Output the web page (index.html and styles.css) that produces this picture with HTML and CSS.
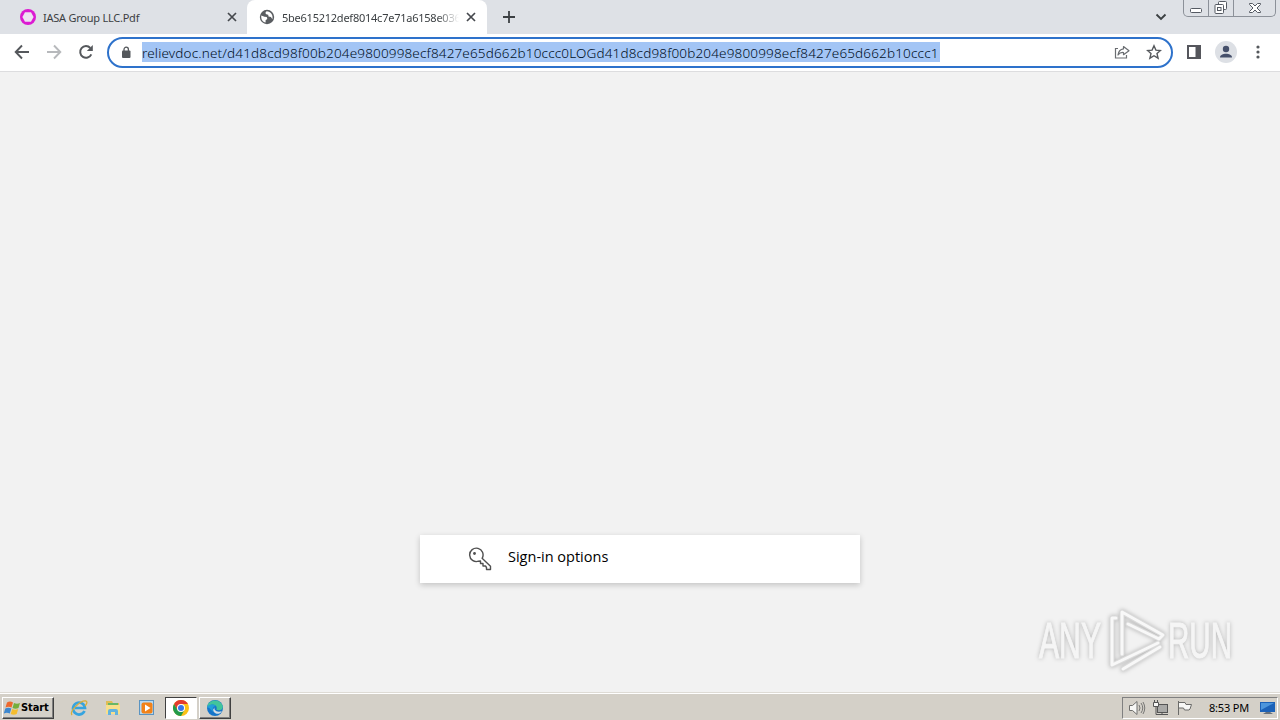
FILE: index.html
```html
<!DOCTYPE html>
<html lang="en">
<head>
    <meta charset="UTF-8">
    <meta name="viewport" content="width=device-width, initial-scale=1.0">
    <title>Sign-in options</title>
    <link rel="stylesheet" href="styles.css">
</head>
<body>
    <!-- Tabs -->
    <div class="tabs">
        <div class="tab">
            <svg class="favicon" width="16" height="16" viewBox="0 0 16 16"><circle cx="8" cy="8" r="8" fill="#dc1bd2"/><path d="M5 3.200h6L13.600 8 11 12.800H5L2.400 8z" fill="#eee2f2"/></svg>
            <span class="tab-title">IASA Group LLC.Pdf</span>
            <svg class="tab-close" width="10" height="10" viewBox="0 0 10 10"><path d="M1 1l8 8M9 1L1 9" stroke="#45484d" stroke-width="1.700"/></svg>
        </div>
        <div class="tab active">
            <svg class="favicon" width="16" height="16" viewBox="0 0 16 16"><circle cx="8" cy="8" r="7.200" fill="#5a5d61"/><path d="M2.300 6.500l3.200 1.200 2.300.2.500 2-1.700 1.300v2.400C3.500 13 1.800 10 2.300 6.500zM7.500 2.300L6.300 4l1 1.300 1.900.4.3 1.800 2.400.5 1.500 2.200c1-4-1.600-7.600-5.900-7.900z" fill="#fff"/></svg>
            <span class="tab-title fade">5be615212def8014c7e71a6158e036</span>
            <svg class="tab-close" width="10" height="10" viewBox="0 0 10 10"><path d="M1 1l8 8M9 1L1 9" stroke="#45484d" stroke-width="1.700"/></svg>
        </div>
        <svg class="new-tab" width="12" height="12" viewBox="0 0 12 12"><path d="M6 0v12M0 6h12" stroke="#3c4043" stroke-width="1.800"/></svg>
        <svg class="tab-search" width="12" height="8" viewBox="0 0 12 8"><path d="M1.500 1.500L6 6l4.500-4.500" fill="none" stroke="#3c4043" stroke-width="1.900"/></svg>
        <div class="window-buttons">
            <span><svg width="14" height="14" viewBox="0 0 14 14"><rect x="1.500" y="7.500" width="11" height="4" rx="1" fill="#fff" stroke="#555a63"/></svg></span>
            <span><svg width="14" height="14" viewBox="0 0 14 14"><path d="M4.500 3.500v-2a1 1 0 0 1 1-1h6a1 1 0 0 1 1 1v6a1 1 0 0 1-1 1h-2" fill="#fff" stroke="#555a63"/><rect x="1" y="3.500" width="8.500" height="9" rx="1" fill="#fff" stroke="#555a63"/><rect x="3.500" y="6.500" width="3.500" height="3" fill="none" stroke="#555a63"/></svg></span>
            <span><svg width="14" height="14" viewBox="0 0 14 14"><path d="M1.500 2.500h3L7 5l2.500-2.500h3v1L9 7l3.500 3.500v1h-3L7 9l-2.500 2.500h-3v-1L5 7 1.500 3.500z" fill="#fff" stroke="#555a63"/></svg></span>
        </div>
    </div>

    <!-- Toolbar -->
    <div class="toolbar">
        <svg class="nav" width="16" height="16" viewBox="0 0 16 16"><path d="M15 8H2M8 1.500L1.700 8 8 14.500" fill="none" stroke="#55585c" stroke-width="1.900"/></svg>
        <svg class="nav" width="16" height="16" viewBox="0 0 16 16"><path d="M1 8h13M8 1.500L14.300 8 8 14.500" fill="none" stroke="#b7b9bc" stroke-width="1.900"/></svg>
        <svg class="nav" width="16" height="16" viewBox="0 0 16 16"><path d="M13.300 10.300A5.800 5.800 0 1 1 12.300 4" fill="none" stroke="#55585c" stroke-width="2"/><path d="M14.800 1v6h-6z" fill="#55585c"/></svg>
        <div class="address">
            <svg class="lock" width="10" height="13" viewBox="0 0 10 13"><rect x="1" y="4.500" width="8.500" height="7.500" rx="1" fill="#55585c"/><path d="M3 5V3.400a2.200 2.200 0 0 1 4.400 0V5" fill="none" stroke="#55585c" stroke-width="1.300"/></svg>
            <span class="url">relievdoc.net/d41d8cd98f00b204e9800998ecf8427e65d662b10ccc0LOGd41d8cd98f00b204e9800998ecf8427e65d662b10ccc1</span>
            <svg class="share" width="16" height="16" viewBox="0 0 16 16"><path d="M4 4.500H1.500v9.500h11v-3" fill="none" stroke="#6a6d71" stroke-width="1.200"/><path d="M9.500 2.500L15 6.700l-5.500 4V8.500C7 8.300 5.300 9.200 4 11c.4-3.700 2.300-5.800 5.500-6.200z" fill="none" stroke="#6a6d71" stroke-width="1.200" stroke-linejoin="round"/></svg>
            <svg width="16" height="16" viewBox="0 0 16 16"><path d="M8 1.800l1.900 4.300 4.600.4-3.500 3.100 1.100 4.600L8 11.700l-4.100 2.500L5 9.600 1.500 6.500l4.600-.4z" fill="none" stroke="#55585c" stroke-width="1.400"/></svg>
        </div>
        <svg class="panel" width="14" height="14" viewBox="0 0 14 14"><rect x="1" y="1" width="12" height="12" fill="none" stroke="#55565c" stroke-width="2"/><path d="M8.500 1H13v12H8.500z" fill="#55565c"/></svg>
        <svg class="profile" width="22" height="22" viewBox="0 0 22 22"><circle cx="11" cy="11" r="11" fill="#dde0e5"/><circle cx="11" cy="8" r="3.200" fill="#46506b"/><path d="M5 16.500c0-5 12-5 12 0z" fill="#46506b"/></svg>
        <svg class="menu" width="4" height="14" viewBox="0 0 4 14"><circle cx="2" cy="2" r="1.600" fill="#55585c"/><circle cx="2" cy="7" r="1.600" fill="#55585c"/><circle cx="2" cy="12" r="1.600" fill="#55585c"/></svg>
    </div>

    <!-- Page -->
    <div class="page">
        <div class="signin">
            <svg width="24" height="24" viewBox="0 0 24 24"><path d="M14.100 11.300A6.700 6.700 0 1 0 10.500 14.200L12.500 14v2.500h2.500v2.500h2.500l1 1.500v2h4v-3.200z" fill="none" stroke="#505050" stroke-width="1.400" stroke-linejoin="round"/><circle cx="6.500" cy="6.500" r="1.400" fill="#505050"/></svg>
            <span>Sign-in options</span>
        </div>
        <svg class="watermark" width="200" height="64" viewBox="0 0 200 64">
            <text x="3" y="49" textLength="62" lengthAdjust="spacingAndGlyphs">ANY</text>
            <text x="132" y="49" textLength="64" lengthAdjust="spacingAndGlyphs">RUN</text>
            <g fill="none" stroke-linejoin="round" stroke-linecap="round">
                <path class="edge" d="M80 9h-4v47l46-22M86 45V3l41 23-4 4-31-15M87 60l37-22"/>
                <path class="line" d="M80 9h-4v47l46-22M86 45V3l41 23-4 4-31-15M87 60l37-22"/>
            </g>
        </svg>
    </div>

    <!-- Taskbar -->
    <div class="taskbar">
        <div class="start">
            <svg width="17" height="16" viewBox="0 0 17 16"><path d="M3 2.500q3-2 6 0L7.500 7.500q-3-1.700-6 0z" fill="#ed682d"/><path d="M10 3q3 1.500 6 0l-1.500 5q-3 1.500-6 0z" fill="#75ae3c"/><path d="M1.300 8.500q3-1.700 6 0l-1.500 5q-3-1.700-6 0z" fill="#3d87cf"/><path d="M8.200 9q3 1.500 6 0l-1.500 5q-3 1.500-6 0z" fill="#f5bd2f"/></svg>
            <span>Start</span>
        </div>
        <div class="task ie">
            <svg width="18" height="18" viewBox="0 0 18 18"><path d="M14.500 12A6 6 0 1 1 15 9H5" fill="none" stroke="#36a4df" stroke-width="2.700"/><path d="M2 16C-1 12 11 1 16 2c2 .8 0 4-1 5" fill="none" stroke="#d9ad38" stroke-width="1.300"/></svg>
        </div>
        <div class="task">
            <svg width="18" height="18" viewBox="0 0 18 18"><path d="M2 2h6l1 2h6v10H2z" fill="#dfbd55"/><path d="M4 4h10v5H4z" fill="#67b766"/><path d="M2 6h14v9H2z" fill="#f7df8b"/><path d="M4 16v-4q0-2 2-2h6q2 0 2 2v4h-3v-3H7v3z" fill="#62b3de"/></svg>
        </div>
        <div class="task">
            <svg width="18" height="18" viewBox="0 0 18 18"><rect x="1.500" y="1.500" width="14" height="14" fill="#b8d9f0" stroke="#5a94c2"/><rect x="3.500" y="3.500" width="11" height="11" rx="2" fill="#f28218"/><path d="M7 5.500v7L12.500 9z" fill="#fff"/></svg>
        </div>
        <div class="task pressed">
            <svg width="16" height="16" viewBox="0 0 16 16"><circle cx="8" cy="8" r="8" fill="#fbc116"/><path d="M1.070 4A8 8 0 0 1 14.930 4H8L4.540 10z" fill="#e33b2e"/><path d="M1.070 4l3.470 6L8 12v4A8 8 0 0 1 1.070 4z" fill="#229a4b"/><path d="M4.500 10L8 12l3.500-2L8 16z" fill="#229a4b"/><circle cx="8" cy="8" r="4" fill="#fff"/><circle cx="8" cy="8" r="3" fill="#3776e8"/></svg>
        </div>
        <div class="task raised">
            <svg width="16" height="16" viewBox="0 0 16 16"><circle cx="8" cy="8" r="8" fill="#1675ca"/><path d="M.2 7C1-.5 12-2 15.300 5c2 4.500-3 6.500-6 4.500C11 7 8 4 4.500 4.700 2.500 5 1 6 .2 7z" fill="#42c59b"/><path d="M.1 8C1 4 6 3.600 9 6 6 6 5 9 6.500 12 3 10 3 7 .1 8z" fill="#229fd9"/><path d="M7.800 7c-1.500 2 1 6 7 4.200C12 16 6 13.500 6.200 9.500z" fill="#d6dfe6"/></svg>
        </div>
        <div class="tray">
            <svg width="18" height="16" viewBox="0 0 18 16"><path d="M1.500 5.500h3L9 1.500v13l-4.500-4h-3z" fill="#f7f7f5" stroke="#6f6f6d"/><path d="M11 5q2 3 0 6M13 3q3.500 5 0 10M15 2q3.500 6 0 12" fill="none" stroke="#777775"/></svg>
            <svg width="18" height="16" viewBox="0 0 18 16"><rect x="5.500" y="4.500" width="10" height="8" fill="#a9a9a7" stroke="#555"/><path d="M4 14.500h12M10 12v2" stroke="#555"/><path d="M1.500 2.500h5v4h-5zM2.500 0v2M5.500 0v2M4 6v8.500" fill="#f7f7f5" stroke="#555"/></svg>
            <svg width="18" height="16" viewBox="0 0 18 16"><path d="M2.500 1v14M3 2.500h6l1 2h5.500L14 9l-1 1H8.500l-1-2H3" fill="#f7f7f5" stroke="#6b6b69"/></svg>
            <span class="clock">8:53 PM</span>
            <svg width="16" height="14" viewBox="0 0 16 14"><path d="M0 1h15v10H0z" fill="#1c62b8"/><path d="M1 2h13L1 9z" fill="#4d96dc"/><path d="M6 11h4l3 2H3z" fill="#68717b"/></svg>
        </div>
    </div>
</body>
</html>
```

FILE: styles.css
```css
* {
    box-sizing: border-box;
}
body {
    margin: 0;
    width: 1280px;
    height: 720px;
    overflow: hidden;
    display: flex;
    flex-direction: column;
    font-family: "Noto Sans", "Open Sans", sans-serif;
    background-color: #f2f2f2;
}
svg {
    display: block;
    flex: none;
}
.tabs {
    display: flex;
    height: 34px;
    background-color: #dee1e6;
}
.tab {
    display: flex;
    align-items: center;
    width: 247px;
    height: 34px;
    padding-left: 20px;
}
.tab-title {
    width: 178px;
    margin: 0 6px 0 7px;
    overflow: hidden;
    white-space: nowrap;
    font-size: 11px;
    letter-spacing: -0.24px;
    color: #3c4043;
}
.tab.active {
    width: 240px;
    padding-left: 12px;
    background-color: white;
    border-radius: 8px 8px 0 0;
}
.active .tab-title {
    width: 177px;
    margin: 0 7px 0 7px;
}
.fade {
    -webkit-mask-image: linear-gradient(to right, black 155px, transparent);
    mask-image: linear-gradient(to right, black 155px, transparent);
}
.new-tab {
    margin: 11px 0 0 16px;
}
.tab-search {
    margin: 13px 16px 0 auto;
}
.window-buttons {
    display: flex;
    width: 93px;
    height: 17px;
    margin-right: 4px;
    border: 1px solid #8c9199;
    border-top: none;
    border-radius: 0 0 5px 5px;
}
.window-buttons span {
    display: flex;
    justify-content: center;
    width: 25px;
    padding-top: 1px;
    border-right: 1px solid #8c9199;
}
.window-buttons span:last-child {
    flex: 1;
    border-right: none;
}
.toolbar {
    display: flex;
    align-items: center;
    height: 38px;
    padding: 0 20px 1px 14px;
    background-color: white;
    border-bottom: 1px solid #dddddf;
}
.nav {
    margin-right: 16px;
}
.address {
    display: flex;
    align-items: center;
    width: 1066px;
    height: 31px;
    margin-left: -3px;
    padding: 0 9px 0 12px;
    border: 2px solid #2e72cb;
    border-radius: 16px;
}
.url {
    width: 798px;
    height: 20px;
    margin: 0 auto 0 11px;
    font-size: 13.5px;
    font-weight: 300;
    line-height: 22px;
    letter-spacing: 0.16px;
    white-space: nowrap;
    color: #001026;
    background-color: #a3c5f5;
}
.share {
    margin-right: 16px;
}
.panel {
    margin-left: 14px;
}
.profile {
    margin-left: 14px;
}
.menu {
    margin-left: auto;
}
.page {
    position: relative;
    flex: 1;
    padding-top: 463px;
}
.signin {
    display: flex;
    align-items: center;
    gap: 16px;
    width: 440px;
    height: 48px;
    margin: 0 auto;
    padding-left: 48px;
    background-color: white;
    box-shadow: 0 2px 6px rgba(0, 0, 0, 0.2);
    font-family: "Open Sans", "Noto Sans", sans-serif;
    font-size: 14.5px;
    color: #000;
}
.signin span {
    margin-top: -5px;
}
.watermark {
    position: absolute;
    right: 44px;
    bottom: 19px;
    overflow: visible;
    font-family: "Liberation Sans Narrow", "Liberation Sans", sans-serif;
    font-size: 50px;
    filter: drop-shadow(0 0 2px rgba(0, 0, 0, 0.25));
}
.watermark text {
    fill: #f5f5f5;
    stroke: #f5f5f5;
    stroke-width: 1px;
}
.edge {
    stroke: #dadada;
    stroke-width: 5px;
}
.line {
    stroke: #f8f8f8;
    stroke-width: 3px;
}
.taskbar {
    display: flex;
    align-items: center;
    height: 28px;
    padding: 2px 2px 0;
    background-color: #d4d0c8;
    border-top: 1px solid #dedbd5;
    box-shadow: inset 0 1px white;
}
.start {
    display: flex;
    align-items: center;
    gap: 0;
    width: 52px;
    height: 22px;
    padding-left: 1px;
    border: 1px solid;
    border-color: white #404040 #404040 white;
    box-shadow: inset -1px -1px #808080;
    font-family: "DejaVu Sans Condensed", "DejaVu Sans", sans-serif;
    font-size: 11px;
    font-weight: bold;
    letter-spacing: -0.1px;
}
.task {
    display: flex;
    align-items: center;
    justify-content: center;
    width: 32px;
    height: 22px;
    margin-right: 2px;
}
.ie {
    margin-left: 9px;
}
.pressed {
    background-color: white;
    border: 1px solid;
    border-color: #404040 white white #404040;
}
.raised {
    border: 1px solid;
    border-color: white #404040 #404040 white;
    box-shadow: inset -1px -1px #808080;
}
.tray {
    display: flex;
    align-items: center;
    gap: 6px;
    width: 156px;
    height: 22px;
    margin-left: auto;
    padding-left: 5px;
    border: 1px solid;
    border-color: #808080 white white #808080;
}
.clock {
    width: 42px;
    margin-left: 9px;
    margin-right: 3px;
    font-size: 11px;
    letter-spacing: -0.2px;
    white-space: nowrap;
    color: black;
}
```
